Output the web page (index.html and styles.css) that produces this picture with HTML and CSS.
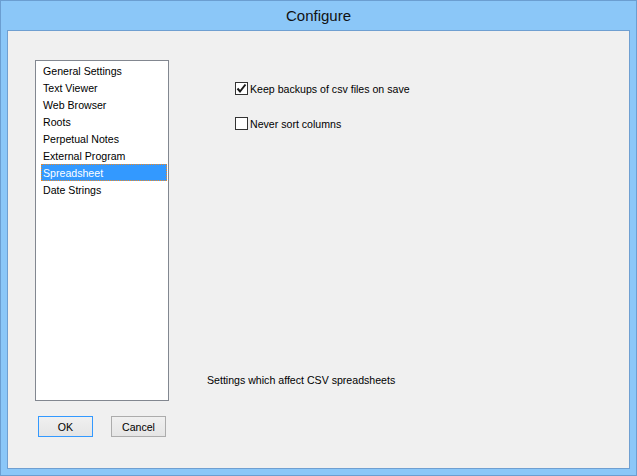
FILE: index.html
```html
<!DOCTYPE html>
<html lang="en">
<head>
    <meta charset="UTF-8">
    <title>Configure</title>
    <link rel="stylesheet" href="styles.css">
</head>
<body>
    <div class="window">
        <div class="titlebar">Configure</div>
        <div class="client">
            <div class="left">
                <ul class="pages">
                    <li>General Settings</li>
                    <li>Text Viewer</li>
                    <li>Web Browser</li>
                    <li>Roots</li>
                    <li>Perpetual Notes</li>
                    <li>External Program</li>
                    <li class="selected">Spreadsheet</li>
                    <li>Date Strings</li>
                </ul>
                <div class="buttons">
                    <button class="btn default">OK</button>
                    <button class="btn">Cancel</button>
                </div>
            </div>
            <div class="panel">
                <div class="options">
                    <label class="check">
                        <span class="box">
                            <svg width="11" height="11" viewBox="0 0 11 11">
                                <polyline points="1.5,5.5 4,8.5 9.5,1.5" fill="none" stroke="#1a1a1a" stroke-width="2"/>
                            </svg>
                        </span>
                        Keep backups of csv files on save
                    </label>
                    <label class="check">
                        <span class="box"></span>
                        Never sort columns
                    </label>
                </div>
                <div class="caption">Settings which affect CSV spreadsheets</div>
            </div>
        </div>
    </div>
</body>
</html>
```

FILE: styles.css
```css
body {
    margin: 0;
    font-family: "Liberation Sans", Arial, sans-serif;
    font-size: 10.6px;
    color: #000;
}

.window {
    width: 637px;
    height: 476px;
    box-sizing: border-box;
    border: 1px solid #6b9ed1;
    background-color: #8bc7f8;
    padding: 0 6px 6px 6px;
    display: flex;
    flex-direction: column;
}

.titlebar {
    height: 29px;
    line-height: 29px;
    text-align: center;
    font-size: 15px;
    color: #111;
}

.client {
    flex: 1;
    background-color: #f0f0f0;
    border: 1px solid #6f9fd1;
    display: flex;
    padding: 29px 0 0 27px;
    gap: 38px;
}

.left {
    display: flex;
    flex-direction: column;
}

.pages {
    list-style: none;
    margin: 0;
    padding: 1px 1px 0 5px;
    width: 134px;
    height: 341px;
    box-sizing: border-box;
    background-color: #fff;
    border: 1px solid #828790;
}

.pages li {
    height: 17px;
    line-height: 16px;
    padding-left: 1px;
    border: 1px dotted transparent;
    box-sizing: border-box;
    white-space: nowrap;
}

.pages li.selected {
    background-color: #3399ff;
    color: #fff;
    border-color: #f08a24;
}

.buttons {
    display: flex;
    gap: 18px;
    margin-top: 15px;
    padding-left: 3px;
}

.btn {
    width: 55px;
    height: 21px;
    padding: 0;
    font-family: inherit;
    font-size: 10.6px;
    color: #000;
    background: linear-gradient(#f0f0f0, #e5e5e5);
    border: 1px solid #acacac;
}

.btn.default {
    border-color: #3399ff;
}

.panel {
    height: 341px;
    display: flex;
    flex-direction: column;
    justify-content: space-between;
}

.options {
    display: flex;
    flex-direction: column;
    gap: 18px;
    padding: 20px 0 0 28px;
}

.check {
    display: flex;
    align-items: center;
    gap: 2px;
    height: 17px;
}

.box {
    width: 13px;
    height: 13px;
    box-sizing: border-box;
    border: 1px solid #333;
    background-color: #fff;
    display: flex;
    align-items: center;
    justify-content: center;
}

.caption {
    line-height: 13px;
    margin-bottom: 14px;
}
```
